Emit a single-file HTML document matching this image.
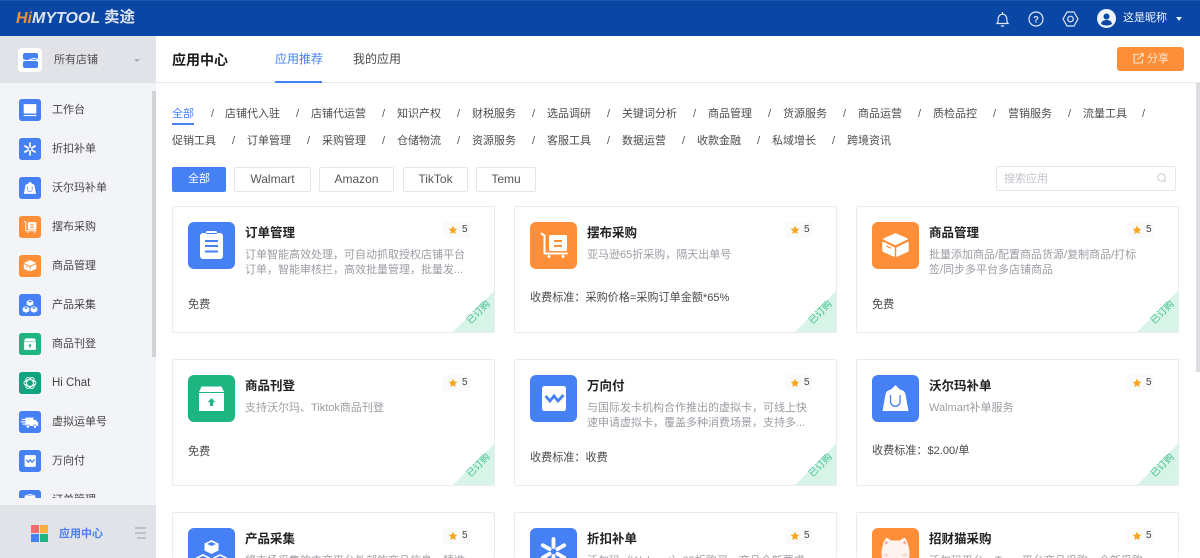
<!DOCTYPE html>
<html lang="zh-CN"><head><meta charset="utf-8"><title>应用中心</title>
<style>
*{box-sizing:border-box}
html,body{margin:0;padding:0;width:1200px;height:558px;overflow:hidden;background:#fff}
body{position:relative;font-family:"Liberation Sans","Noto Sans CJK SC",sans-serif;font-size:11px;color:#555}
.a{position:absolute;white-space:nowrap}
.t{position:absolute;white-space:nowrap;line-height:16px;height:16px}
.hdr{position:absolute;left:0;top:0;width:1200px;height:36px;background:#0a46a4;border-top:1px solid #1d55ad}
.side{position:absolute;left:0;top:36px;width:156px;height:522px;background:#f3f4f7}
.nav{position:absolute;left:0;top:47px;width:156px;height:415px;overflow:hidden}
.nav svg{position:absolute;left:19px;width:22px;height:22px}
.nav .t{left:52px;color:#454545;font-size:11px}
.cat{font-size:11px;color:#4d4d4d}
.sl{color:#555;font-size:11px}
.btn{position:absolute;top:167px;height:25px;line-height:23px;text-align:center;background:#fff;border:1px solid #e4e6eb;border-radius:2px;font-size:12px;color:#555}
.card{position:absolute;width:323px;height:127px;background:#fff;border:1px solid #e9ebef;border-radius:2px;overflow:hidden}
.card.last{height:46px;border-bottom:0}
.card>svg.i{position:absolute;left:15px;top:15px;width:47px;height:47px}
.ti{position:absolute;left:72px;top:17px;font-size:12.5px;font-weight:700;color:#222;line-height:18px;white-space:nowrap}
.rt{position:absolute;left:270px;top:15px;width:27px;height:16px;background:#fafafa;border-radius:2px;font-size:10px;color:#444;line-height:15px;padding-left:19px}
.rt svg{position:absolute;left:5px;top:3px;width:10px;height:10px}
.de{position:absolute;left:72px;top:41px;width:232px;font-size:11px;line-height:15px;color:#9a9da3}
.pr{position:absolute;left:15px;font-size:11.1px;line-height:16px;color:#4a4a4a;white-space:nowrap}
.cn{position:absolute;right:0;bottom:0;width:0;height:0;border-style:solid;border-width:0 0 41px 41px;border-color:transparent transparent #d8f4e8 transparent}
.cx{position:absolute;left:291px;top:100px;width:30px;text-align:center;font-size:9.500px;line-height:12px;color:#3fc08f;transform:rotate(-45deg);white-space:nowrap}
</style></head><body>
<svg width="0" height="0" style="position:absolute">
<symbol id="order" viewBox="0 0 47 47"><rect width="47" height="47" rx="6" fill="#4680f5"/><rect x="12" y="11" width="23" height="26" rx="3" fill="#fff"/><rect x="18" y="9" width="11" height="4" rx="1.5" fill="#fff"/><path d="M18 11.5h11" stroke="#4680f5" stroke-width="1"/><path d="M17 19h13M17 24h13M17 29.500h13" stroke="#4680f5" stroke-width="2"/></symbol>
<symbol id="cart" viewBox="0 0 47 47"><rect width="47" height="47" rx="6" fill="#fe8f38"/><path d="M11.500 11.500l3 2V31.500H37" fill="none" stroke="#fff" stroke-width="2" stroke-linecap="round" stroke-linejoin="round"/><rect x="19" y="13" width="18" height="16" rx="1.500" fill="#fff"/><path d="M24 19h8M24 24h8" stroke="#fe8f38" stroke-width="2"/><circle cx="19" cy="34.500" r="1.500" fill="#fff"/><circle cx="33" cy="34.500" r="1.500" fill="#fff"/></symbol>
<symbol id="box" viewBox="0 0 47 47"><rect width="47" height="47" rx="6" fill="#fe8f38"/><g fill="#fff" stroke="#fff" stroke-width="1.500" stroke-linejoin="round"><path d="M23.500 12L35 17 23.500 22.500 12 17z"/><path d="M11 20.500l11 5.500v8L11 29z"/><path d="M36 20.500L25 26v8l11-5z"/></g><path d="M14.500 24l4.500 2.200" stroke="#fe8f38" stroke-width="1.300"/></symbol>
<symbol id="up" viewBox="0 0 47 47"><rect width="47" height="47" rx="6" fill="#1eb680"/><path d="M13.500 11.500h20l2.500 5.500H11z" fill="#fff"/><rect x="11" y="18" width="25" height="18" fill="#fff"/><path d="M23.500 23l3.800 4.200h-2.300v3.800h-3v-3.800h-2.300z" fill="#1eb680"/></symbol>
<symbol id="wan" viewBox="0 0 47 47"><rect width="47" height="47" rx="6" fill="#4680f5"/><rect x="12" y="11" width="24" height="25" rx="2.500" fill="#fff"/><path d="M15.500 21l4.500 5 4-5 4 5 5.500-6" fill="none" stroke="#4680f5" stroke-width="2.800"/></symbol>
<symbol id="bag" viewBox="0 0 47 47"><rect width="47" height="47" rx="6" fill="#4680f5"/><path d="M23.500 10l4.500 4.500c3 .8 5 2 5.500 5l3 16.500h-26l3-16.500c.5-3 2.500-4.200 5.500-5z" fill="#fff"/><path d="M18.500 20v6.500a4.800 4.800 0 0 0 9.600 0V20" fill="none" stroke="#4680f5" stroke-width="1.300"/></symbol>
<symbol id="cube" viewBox="0 0 47 47"><rect width="47" height="47" rx="6" fill="#4680f5"/><g fill="#fff"><path d="M23.500 12l7 3.500v7l-7 3.500-7-3.500v-7z"/><path d="M15 26l7 3.500v7L15 40l-7-3.500v-7z"/><path d="M32 26l7 3.500v7L32 40l-7-3.500v-7z"/></g><g fill="#4680f5"><path d="M19 16l4.500-2 4.500 2-4.500 2z"/><path d="M10.500 30l4.500-2 4.500 2-4.500 2z"/><path d="M27.500 30l4.500-2 4.500 2-4.500 2z"/></g></symbol>
<symbol id="spark" viewBox="0 0 47 47"><rect width="47" height="47" rx="6" fill="#4680f5"/><g stroke="#fff" stroke-width="3.800" stroke-linecap="round"><path d="M23.500 11v8M23.500 28v8M12.700 17.200l6.900 4M27.400 25.800l6.900 4M12.700 29.800l6.900-4M27.400 21.200l6.900-4"/></g></symbol>
<symbol id="cat" viewBox="0 0 47 47"><rect width="47" height="47" rx="6" fill="#fe8f38"/><path d="M14 10c2 0 4 1.500 5 2.500h9c1-1 3-2.500 5-2.500 2.500 3 4.500 10 4.500 16 0 9-6 14-14 14s-14-5-14-14c0-6 2-13 4.500-16z" fill="#fdf3f0"/><path d="M13.500 12.500l3 2.200-3.800 2zM33.500 12.500l-3 2.200 3.800 2z" fill="#f2a599"/><ellipse cx="14" cy="27" rx="2.500" ry="1.500" fill="#f9d8d2"/><ellipse cx="33" cy="27" rx="2.500" ry="1.500" fill="#f9d8d2"/></symbol>
<symbol id="mon" viewBox="0 0 47 47"><rect width="47" height="47" rx="6" fill="#4680f5"/><rect x="10" y="11" width="27" height="20" rx="1.500" fill="#fff"/><rect x="10" y="34" width="27" height="2.500" fill="#fff"/></symbol>
<symbol id="chat" viewBox="0 0 47 47"><rect width="47" height="47" rx="6" fill="#10a37f"/><g fill="none" stroke="#fff" stroke-width="1.800"><ellipse cx="23.500" cy="23.500" rx="13" ry="7"/><ellipse cx="23.500" cy="23.500" rx="13" ry="7" transform="rotate(60 23.500 23.500)"/><ellipse cx="23.500" cy="23.500" rx="13" ry="7" transform="rotate(120 23.500 23.500)"/></g></symbol>
<symbol id="truck" viewBox="0 0 47 47"><rect width="47" height="47" rx="6" fill="#4680f5"/><path d="M14 14h17v18H14z" fill="#fff"/><path d="M31 19h5l5 6v7H31z" fill="#fff"/><path d="M6 18h10M4 23h10M7 28h8" stroke="#fff" stroke-width="2.400"/><circle cx="19" cy="33" r="3.500" fill="#fff" stroke="#4680f5" stroke-width="1.500"/><circle cx="34" cy="33" r="3.500" fill="#fff" stroke="#4680f5" stroke-width="1.500"/></symbol>
<symbol id="star" viewBox="0 0 24 24"><path d="M12 1.500l3.200 6.900 7.300.9-5.400 5 1.500 7.400L12 18.100l-6.600 3.600 1.500-7.400-5.400-5 7.300-.9z" fill="#f5a623"/></symbol>
</svg>

<div class="hdr">
<span class="a" style="left:16px;top:8px;font:italic 700 16px/20px 'Liberation Sans',sans-serif;color:#dde5f4"><span style="color:#ee9231">Hi</span>MYTOOL</span>
<span class="a" style="left:104px;top:7px;font-size:15.500px;line-height:20px;font-weight:700;color:#dde5f4;font-family:'Liberation Sans','Noto Sans CJK SC',sans-serif">卖途</span>
<svg class="a" style="left:995px;top:10px" width="15" height="17" viewBox="0 0 15 17" fill="none" stroke="#dfe7f6" stroke-width="1.200"><path d="M2 12.500c1-1 1.200-2 1.200-4.500 0-2.800 1.800-4.800 4.300-4.800s4.300 2 4.300 4.800c0 2.500.2 3.500 1.200 4.500z"/><path d="M7.500 1v2M5.800 15h3.400"/></svg>
<svg class="a" style="left:1028px;top:10px" width="16" height="16" viewBox="0 0 16 16" fill="none"><circle cx="8" cy="8" r="7" stroke="#dfe7f6" stroke-width="1.200"/><text x="8" y="11.500" text-anchor="middle" font-size="9.500" font-weight="700" fill="#dfe7f6" font-family="Liberation Sans">?</text></svg>
<svg class="a" style="left:1062px;top:10px" width="17" height="16" viewBox="0 0 17 16" fill="none" stroke="#dfe7f6" stroke-width="1.200"><path d="M5 1h7l4 7-4 7H5L1 8z" stroke-linejoin="round"/><circle cx="8.500" cy="8" r="2.800"/></svg>
<svg class="a" style="left:1097px;top:8px" width="19" height="19" viewBox="0 0 19 19"><circle cx="9.500" cy="9.500" r="9.500" fill="#eef3fb"/><circle cx="9.500" cy="7.500" r="3" fill="#0a46a4"/><path d="M4 15c.5-3 3-4 5.500-4s5 1 5.500 4c-1.500 1-3.500 1.500-5.500 1.500S5.500 16 4 15z" fill="#0a46a4"/></svg>
<span class="t" style="left:1123px;top:9px;color:#f2f5fb;font-size:11px">这是昵称</span>
<span class="a" style="left:1176px;top:16px;width:0;height:0;border-style:solid;border-width:4px 3.500px 0 3.500px;border-color:#e8eef8 transparent transparent transparent"></span>
</div>

<div class="side">
<div class="a" style="left:0;top:0;width:156px;height:47px;background:#e1e3e8"></div>
<div class="a" style="left:18px;top:12px;width:24px;height:24px;background:#fff;border-radius:4px"></div>
<svg class="a" style="left:23px;top:17px" width="15" height="15" viewBox="0 0 15 15"><rect x="0" y="0" width="15" height="7" rx="2" fill="#4680f5"/><rect x="0" y="8" width="15" height="7" rx="2" fill="#4680f5"/><path d="M0 6.500q3.700 2 7.500 0t7.500 0" fill="none" stroke="#fff" stroke-width="1"/></svg>
<span class="t" style="left:54px;top:16px;color:#4f4f4f;font-size:11px">所有店铺</span>
<span class="a" style="left:134px;top:23px;width:0;height:0;border-style:solid;border-width:3px 3.500px 0 3.500px;border-color:#a8abb2 transparent transparent transparent"></span>
<div class="nav">
<svg style="top:16px"><use href="#mon"/></svg><span class="t" style="top:19px">工作台</span>
<svg style="top:55px"><use href="#spark"/></svg><span class="t" style="top:58px">折扣补单</span>
<svg style="top:94px"><use href="#bag"/></svg><span class="t" style="top:97px">沃尔玛补单</span>
<svg style="top:133px"><use href="#cart"/></svg><span class="t" style="top:136px">摆布采购</span>
<svg style="top:172px"><use href="#box"/></svg><span class="t" style="top:175px">商品管理</span>
<svg style="top:211px"><use href="#cube"/></svg><span class="t" style="top:214px">产品采集</span>
<svg style="top:250px"><use href="#up"/></svg><span class="t" style="top:253px">商品刊登</span>
<svg style="top:289px"><use href="#chat"/></svg><span class="t" style="top:292px;font-size:11.500px">Hi Chat</span>
<svg style="top:328px"><use href="#truck"/></svg><span class="t" style="top:331px">虚拟运单号</span>
<svg style="top:367px"><use href="#wan"/></svg><span class="t" style="top:370px">万向付</span>
<svg style="top:407px"><use href="#order"/></svg><span class="t" style="top:409px">订单管理</span>
</div>
<div class="a" style="left:152px;top:55px;width:4px;height:266px;background:#d2d4d8"></div>
<div class="a" style="left:0;top:469px;width:156px;height:53px;background:#e1e3e8"></div>
<div class="a" style="left:31px;top:489px;width:8px;height:8px;background:#f76c6c"></div>
<div class="a" style="left:40px;top:489px;width:8px;height:8px;background:#fbaf3f"></div>
<div class="a" style="left:31px;top:498px;width:8px;height:8px;background:#4680f5"></div>
<div class="a" style="left:40px;top:498px;width:8px;height:8px;background:#1eb680"></div>
<span class="t" style="left:59px;top:490px;color:#4a7ff0;font-size:11px;font-weight:700">应用中心</span>
<svg class="a" style="left:135px;top:491px" width="11" height="12" viewBox="0 0 11 12"><path d="M0 1h11M0 6h11M2 11h9" stroke="#9a9da3" stroke-width="1"/></svg>
</div>

<div class="a" style="left:156px;top:82px;width:1044px;height:1px;background:#e6e8ec"></div>
<span class="t" style="left:172px;top:52px;font-size:14px;font-weight:700;color:#1c1c1c">应用中心</span>
<span class="t" style="left:275px;top:51px;font-size:12px;color:#4680f5">应用推荐</span>
<div class="a" style="left:275px;top:81px;width:47px;height:2px;background:#4680f5"></div>
<span class="t" style="left:353px;top:51px;font-size:12px;color:#4a4a4a">我的应用</span>
<div class="a" style="left:1117px;top:47px;width:67px;height:24px;background:#fe8f38;border-radius:3px"></div>
<svg class="a" style="left:1133px;top:53px" width="11" height="11" viewBox="0 0 11 11" fill="none" stroke="#fde7d4" stroke-width="1.100"><path d="M6 1.500H1v8.500h8.500V6"/><path d="M4.500 6.500L10 1M7 .8h3.200V4"/></svg>
<span class="t" style="left:1147px;top:51px;color:#fde7d4;font-size:11px">分享</span>

<span class="t cat" style="left:172px;top:106px;color:#4680f5">全部</span>
<div class="a" style="left:172px;top:123px;width:22px;height:1.500px;background:#4680f5"></div>
<span class="t sl" style="left:211px;top:106px">/</span><span class="t cat" style="left:225px;top:106px">店铺代入驻</span>
<span class="t sl" style="left:296px;top:106px">/</span><span class="t cat" style="left:311px;top:106px">店铺代运营</span>
<span class="t sl" style="left:382px;top:106px">/</span><span class="t cat" style="left:397px;top:106px">知识产权</span>
<span class="t sl" style="left:457px;top:106px">/</span><span class="t cat" style="left:472px;top:106px">财税服务</span>
<span class="t sl" style="left:532px;top:106px">/</span><span class="t cat" style="left:547px;top:106px">选品调研</span>
<span class="t sl" style="left:607px;top:106px">/</span><span class="t cat" style="left:622px;top:106px">关键词分析</span>
<span class="t sl" style="left:693px;top:106px">/</span><span class="t cat" style="left:708px;top:106px">商品管理</span>
<span class="t sl" style="left:768px;top:106px">/</span><span class="t cat" style="left:783px;top:106px">货源服务</span>
<span class="t sl" style="left:843px;top:106px">/</span><span class="t cat" style="left:858px;top:106px">商品运营</span>
<span class="t sl" style="left:918px;top:106px">/</span><span class="t cat" style="left:933px;top:106px">质检品控</span>
<span class="t sl" style="left:993px;top:106px">/</span><span class="t cat" style="left:1008px;top:106px">营销服务</span>
<span class="t sl" style="left:1068px;top:106px">/</span><span class="t cat" style="left:1083px;top:106px">流量工具</span>
<span class="t sl" style="left:1142px;top:106px">/</span>

<span class="t cat" style="left:172px;top:133px">促销工具</span>
<span class="t sl" style="left:232px;top:133px">/</span><span class="t cat" style="left:247px;top:133px">订单管理</span>
<span class="t sl" style="left:307px;top:133px">/</span><span class="t cat" style="left:322px;top:133px">采购管理</span>
<span class="t sl" style="left:382px;top:133px">/</span><span class="t cat" style="left:397px;top:133px">仓储物流</span>
<span class="t sl" style="left:457px;top:133px">/</span><span class="t cat" style="left:472px;top:133px">资源服务</span>
<span class="t sl" style="left:532px;top:133px">/</span><span class="t cat" style="left:547px;top:133px">客服工具</span>
<span class="t sl" style="left:607px;top:133px">/</span><span class="t cat" style="left:622px;top:133px">数据运营</span>
<span class="t sl" style="left:682px;top:133px">/</span><span class="t cat" style="left:697px;top:133px">收款金融</span>
<span class="t sl" style="left:757px;top:133px">/</span><span class="t cat" style="left:772px;top:133px">私域增长</span>
<span class="t sl" style="left:832px;top:133px">/</span><span class="t cat" style="left:847px;top:133px">跨境资讯</span>

<div class="btn" style="left:172px;width:54px;background:#4680f5;border-color:#4680f5;color:#fff;font-size:11px">全部</div>
<div class="btn" style="left:234px;width:77px">Walmart</div>
<div class="btn" style="left:319px;width:75px">Amazon</div>
<div class="btn" style="left:403px;width:65px">TikTok</div>
<div class="btn" style="left:476px;width:60px">Temu</div>
<div class="a" style="left:996px;top:166px;width:180px;height:25px;border:1px solid #e4e6eb;border-radius:2px;background:#fff"></div>
<span class="t" style="left:1004px;top:171px;color:#c0c4cc;font-size:11px">搜索应用</span>
<svg class="a" style="left:1157px;top:173px" width="10" height="10" viewBox="0 0 10 10" fill="none" stroke="#c8ccd2"><circle cx="4.500" cy="4.500" r="3.700"/><path d="M7.300 7.300L9 9"/></svg>

<div class="card" style="left:172px;top:206px"><svg class="i"><use href="#order"/></svg><div class="ti">订单管理</div><div class="rt"><svg><use href="#star"/></svg>5</div><div class="de">订单智能高效处理，可自动抓取授权店铺平台<br>订单，智能审核拦，高效批量管理，批量发...</div><div class="pr" style="top:90px">免费</div><div class="cn"></div><div class="cx">已订购</div></div>
<div class="card" style="left:514px;top:206px"><svg class="i"><use href="#cart"/></svg><div class="ti">摆布采购</div><div class="rt"><svg><use href="#star"/></svg>5</div><div class="de">亚马逊65折采购，隔天出单号</div><div class="pr" style="top:83px">收费标准：采购价格=采购订单金额*65%</div><div class="cn"></div><div class="cx">已订购</div></div>
<div class="card" style="left:856px;top:206px"><svg class="i"><use href="#box"/></svg><div class="ti">商品管理</div><div class="rt"><svg><use href="#star"/></svg>5</div><div class="de">批量添加商品/配置商品货源/复制商品/打标<br>签/同步多平台多店铺商品</div><div class="pr" style="top:90px">免费</div><div class="cn"></div><div class="cx">已订购</div></div>

<div class="card" style="left:172px;top:359px"><svg class="i"><use href="#up"/></svg><div class="ti">商品刊登</div><div class="rt"><svg><use href="#star"/></svg>5</div><div class="de">支持沃尔玛、Tiktok商品刊登</div><div class="pr" style="top:84px">免费</div><div class="cn"></div><div class="cx">已订购</div></div>
<div class="card" style="left:514px;top:359px"><svg class="i"><use href="#wan"/></svg><div class="ti">万向付</div><div class="rt"><svg><use href="#star"/></svg>5</div><div class="de">与国际发卡机构合作推出的虚拟卡，可线上快<br>速申请虚拟卡，覆盖多种消费场景，支持多...</div><div class="pr" style="top:90px">收费标准：收费</div><div class="cn"></div><div class="cx">已订购</div></div>
<div class="card" style="left:856px;top:359px"><svg class="i"><use href="#bag"/></svg><div class="ti">沃尔玛补单</div><div class="rt"><svg><use href="#star"/></svg>5</div><div class="de">Walmart补单服务</div><div class="pr" style="top:83px">收费标准：$2.00/单</div><div class="cn"></div><div class="cx">已订购</div></div>

<div class="card last" style="left:172px;top:512px"><svg class="i"><use href="#cube"/></svg><div class="ti">产品采集</div><div class="rt"><svg><use href="#star"/></svg>5</div><div class="de">将市场采集的电商平台外部的商品信息，精准</div></div>
<div class="card last" style="left:514px;top:512px"><svg class="i"><use href="#spark"/></svg><div class="ti">折扣补单</div><div class="rt"><svg><use href="#star"/></svg>5</div><div class="de">沃尔玛（Walmart）85折购买，商品全新要求</div></div>
<div class="card last" style="left:856px;top:512px"><svg class="i"><use href="#cat"/></svg><div class="ti">招财猫采购</div><div class="rt"><svg><use href="#star"/></svg>5</div><div class="de">沃尔玛平台、Temu平台商品采购，全新采购</div></div>

<div class="a" style="left:1196px;top:83px;width:4px;height:289px;background:#dcdde0"></div>
</body></html>
